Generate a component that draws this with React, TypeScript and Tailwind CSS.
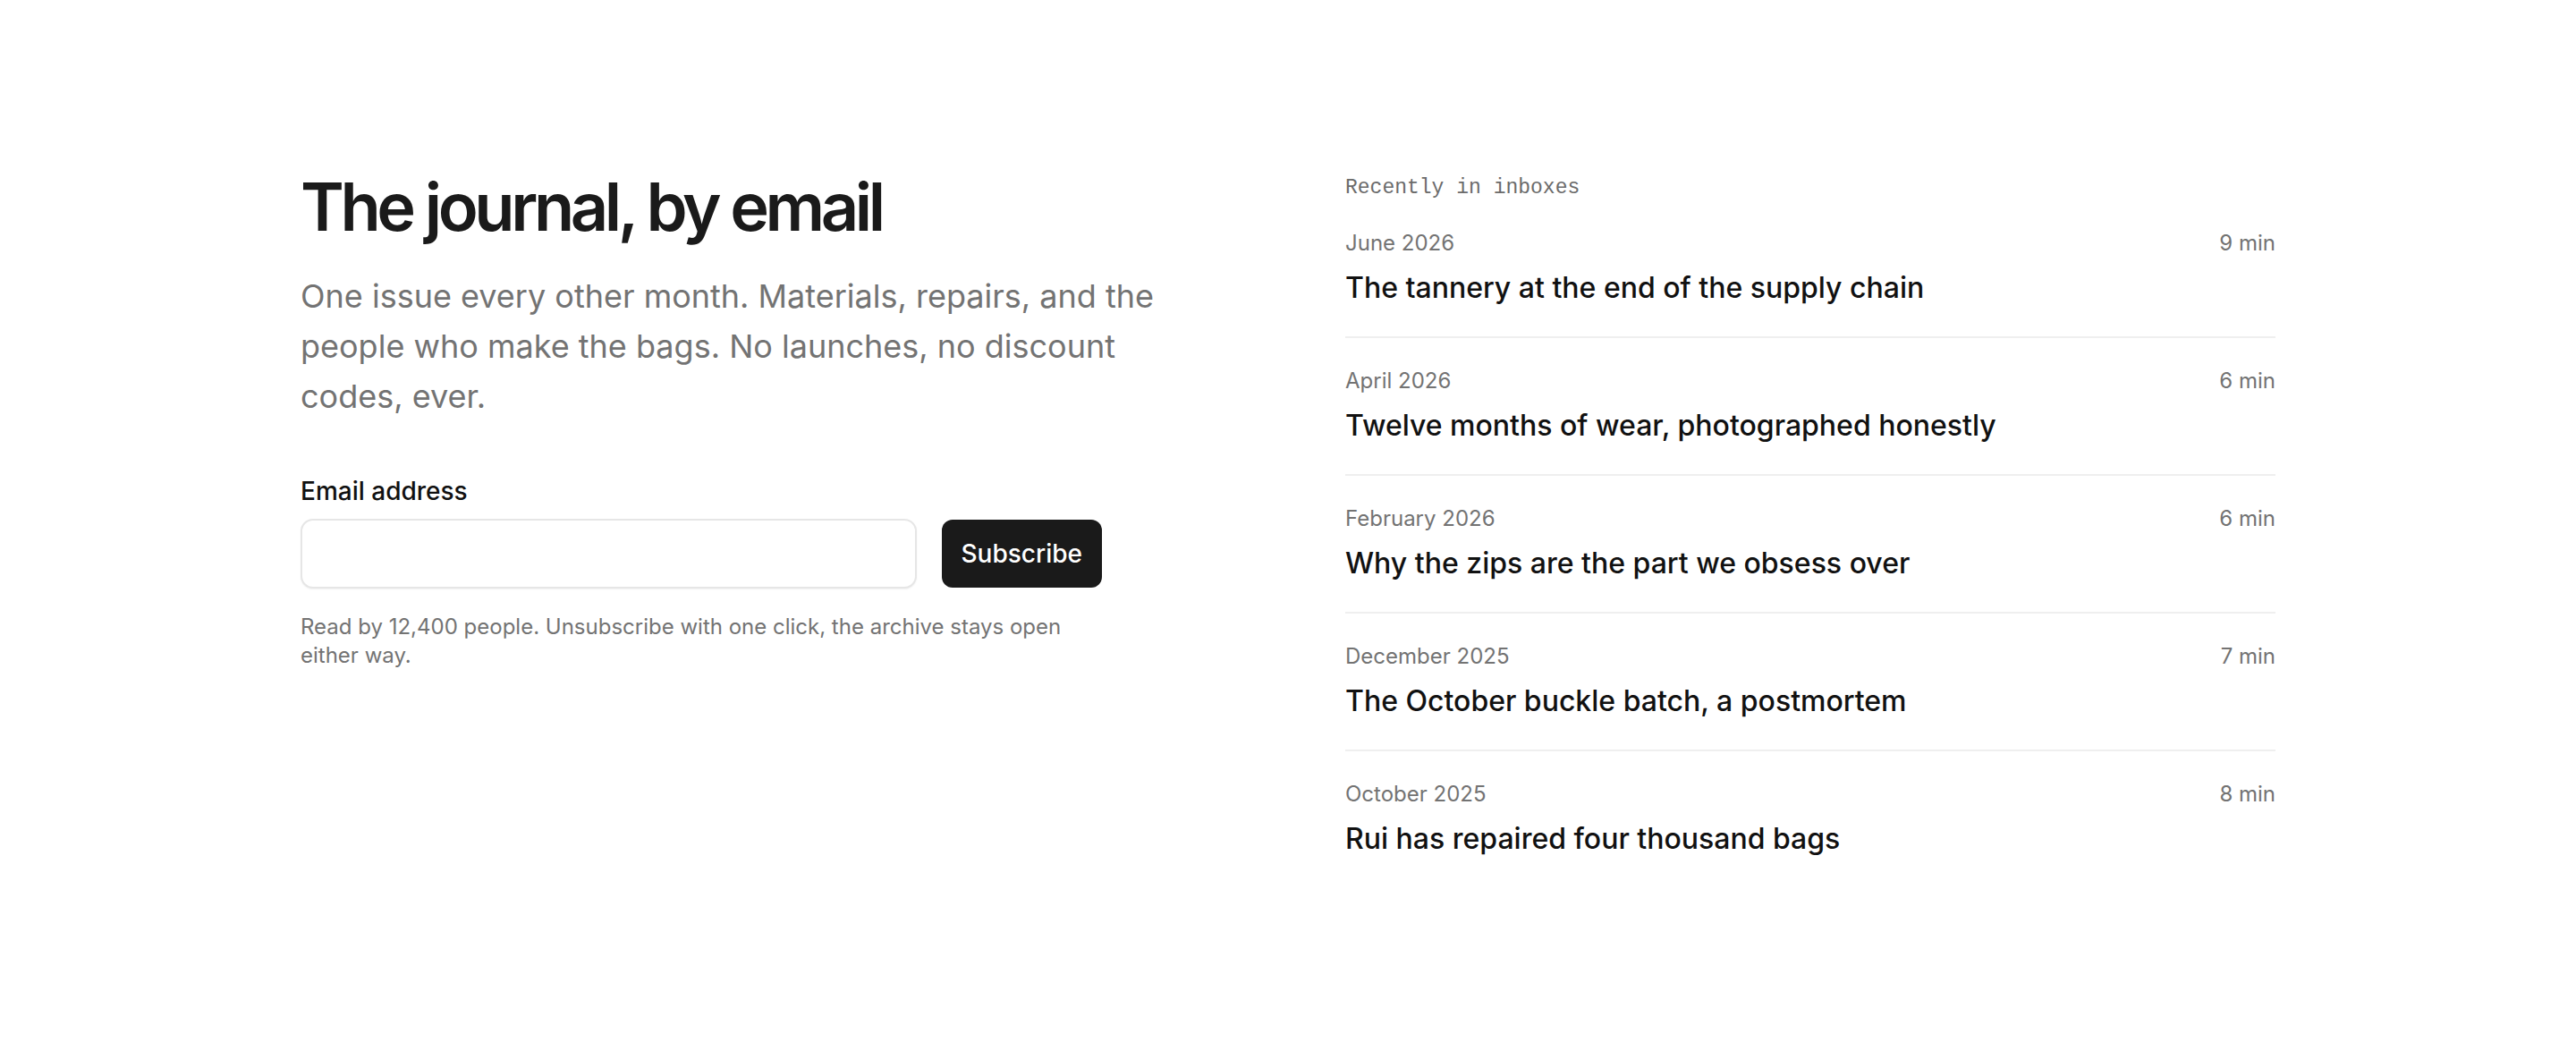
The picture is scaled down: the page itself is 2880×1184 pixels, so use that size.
const issues = [
  { date: "June 2026", mins: 9, title: "The tannery at the end of the supply chain" },
  { date: "April 2026", mins: 6, title: "Twelve months of wear, photographed honestly" },
  { date: "February 2026", mins: 6, title: "Why the zips are the part we obsess over" },
  { date: "December 2025", mins: 7, title: "The October buckle batch, a postmortem" },
  { date: "October 2025", mins: 8, title: "Rui has repaired four thousand bags" },
];

export default function App() {
  return (
    <div className="min-h-screen bg-white font-['Inter',sans-serif] text-[#111]">
      <div className="mx-auto grid w-[2208px] grid-cols-2 items-start gap-32 pt-[196px] pb-[190px]">
        {/* signup */}
        <section>
          <h1 className="text-[74px] font-semibold leading-[70px] tracking-[-0.06em] text-[#1a1a1a]">
            The journal, by email
          </h1>
          <p className="mt-[37px] max-w-[960px] text-[36px] leading-[56px] text-[#737373]">
            One issue every other month. Materials, repairs, and the people who make the bags. No
            launches, no discount codes, ever.
          </p>

          <form className="mt-[60px] max-w-[896px]" onSubmit={(e) => e.preventDefault()}>
            <label htmlFor="email" className="block text-[28px] font-medium leading-9 text-[#111]">
              Email address
            </label>
            <div className="mt-[13px] flex items-center gap-7">
              <input
                id="email"
                type="email"
                className="h-[78px] flex-1 rounded-[14px] border-2 border-[#e6e6e6] bg-white px-5 text-[26px] shadow-[0_1px_2px_rgba(0,0,0,0.06)] outline-none"
              />
              <button
                type="submit"
                className="h-[76px] rounded-[12px] bg-[#1a1a1a] px-[22px] text-[28px] font-medium text-white"
              >
                Subscribe
              </button>
            </div>
            <p className="mt-[27px] text-[24px] leading-8 text-[#737373]">
              Read by 12,400 people. Unsubscribe with one click, the archive stays open either way.
            </p>
          </form>
        </section>

        {/* archive */}
        <section>
          <h2 className="font-['Liberation_Mono',monospace] text-[23px] leading-7 text-[#6b6b6b]">
            Recently in inboxes
          </h2>
          <ul>
            {issues.map((issue, i) => (
              <li
                key={issue.title}
                className={
                  i < issues.length - 1
                    ? "border-b-2 border-[#efefef] pt-8 pb-[34px]"
                    : "pt-8 pb-[34px]"
                }
              >
                <div className="flex items-center justify-between text-[24px] leading-8 text-[#737373]">
                  <span>{issue.date}</span>
                  <span>{issue.mins} min</span>
                </div>
                <div className="mt-[14px] text-[32px] font-medium leading-10 text-[#111]">
                  {issue.title}
                </div>
              </li>
            ))}
          </ul>
        </section>
      </div>
    </div>
  );
}
